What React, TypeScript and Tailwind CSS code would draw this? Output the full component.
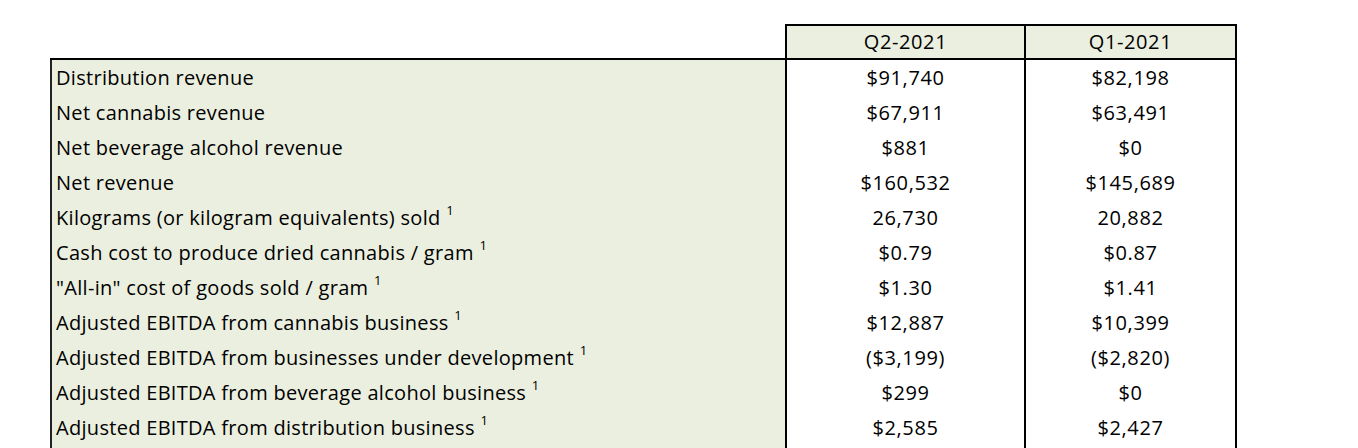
const ROWS: { label: string; note?: boolean; q2: string; q1: string }[] = [
  { label: 'Distribution revenue', q2: '$91,740', q1: '$82,198' },
  { label: 'Net cannabis revenue', q2: '$67,911', q1: '$63,491' },
  { label: 'Net beverage alcohol revenue', q2: '$881', q1: '$0' },
  { label: 'Net revenue', q2: '$160,532', q1: '$145,689' },
  { label: 'Kilograms (or kilogram equivalents) sold', note: true, q2: '26,730', q1: '20,882' },
  { label: 'Cash cost to produce dried cannabis / gram', note: true, q2: '$0.79', q1: '$0.87' },
  { label: '"All-in" cost of goods sold / gram', note: true, q2: '$1.30', q1: '$1.41' },
  { label: 'Adjusted EBITDA from cannabis business', note: true, q2: '$12,887', q1: '$10,399' },
  { label: 'Adjusted EBITDA from businesses under development', note: true, q2: '($3,199)', q1: '($2,820)' },
  { label: 'Adjusted EBITDA from beverage alcohol business', note: true, q2: '$299', q1: '$0' },
  { label: 'Adjusted EBITDA from distribution business', note: true, q2: '$2,585', q1: '$2,427' },
  { label: '', q2: '', q1: '' },
]

export default function App() {
  return (
    <div
      className="h-[448px] w-[1358px] overflow-hidden bg-white pl-[50px] pt-[24px] text-[20px] text-black"
      style={{ fontFamily: '"Open Sans", "Liberation Sans", sans-serif' }}
    >
      {/* 헤더: 분기 라벨 */}
      <div className="flex pl-[735px]">
        <div className="flex border-x-2 border-t-2 border-black bg-[#ebefdf] tracking-[0.6px]">
          <div className="flex h-[32px] w-[237px] items-center justify-center">Q2-2021</div>
          <div className="flex h-[32px] w-[211px] items-center justify-center border-l-2 border-black">
            Q1-2021
          </div>
        </div>
      </div>

      {/* 본문 */}
      <div className="w-[1187px] border-t-2 border-black">
        {ROWS.map((row, i) => (
          <div key={i} className="flex h-[35px]">
            <div className="flex w-[735px] items-center border-l-2 border-[#222] bg-[#ebefdf] pl-1 tracking-[0.3px] whitespace-pre">
              {row.label}
              {row.note && (
                <span className="relative -top-[7px] ml-[2px] text-[13px]"> 1</span>
              )}
            </div>
            <div className="flex w-[239px] items-center justify-center border-l-2 border-black tracking-[0.6px]">
              {row.q2}
            </div>
            <div className="flex w-[213px] items-center justify-center border-x-2 border-black tracking-[0.6px]">
              {row.q1}
            </div>
          </div>
        ))}
      </div>
    </div>
  )
}
